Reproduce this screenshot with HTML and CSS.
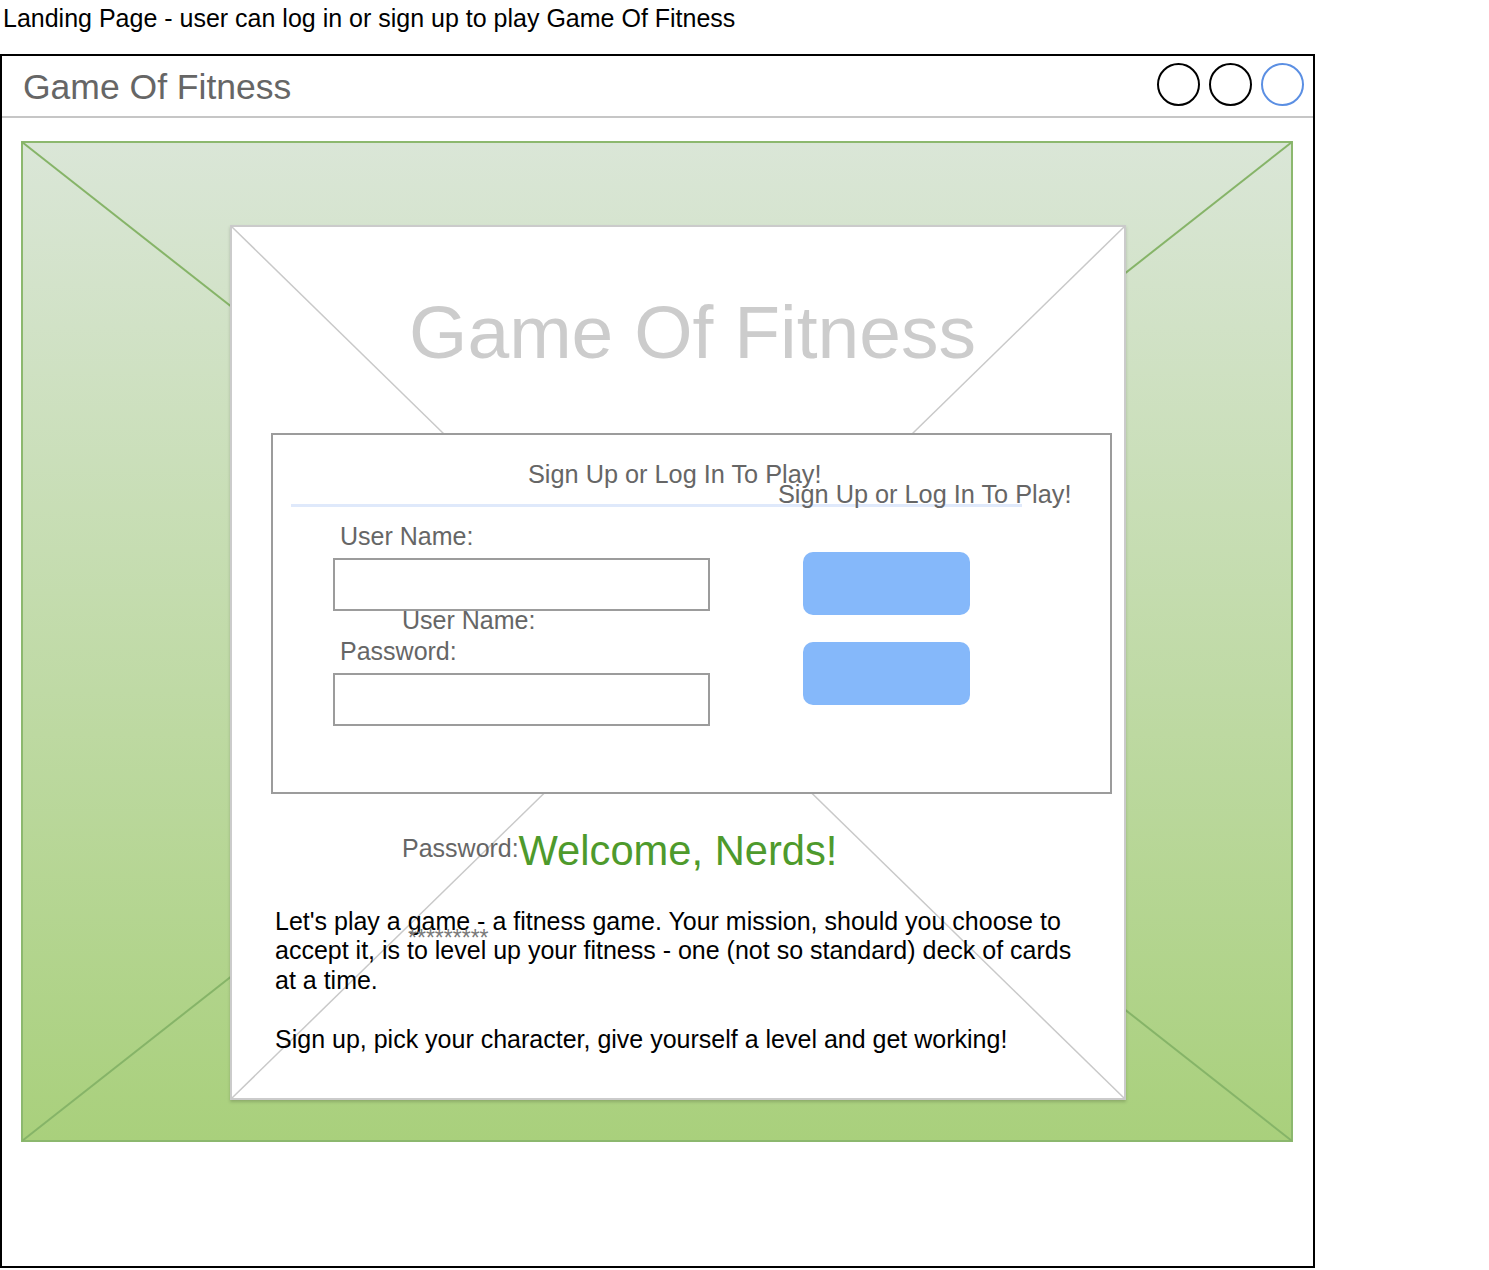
FILE: index.html
```html
<!DOCTYPE html>
<html lang="en">
<head>
<meta charset="utf-8">
<title>Game Of Fitness - Landing Page</title>
<link rel="stylesheet" href="styles.css">
</head>
<body>
<div class="caption">Landing Page - user can log in or sign up to play Game Of Fitness</div>
<div class="window">
  <div class="titlebar">
    <div class="app-title">Game Of Fitness</div>
    <div class="controls">
      <span class="dot"></span>
      <span class="dot"></span>
      <span class="dot dot-blue"></span>
    </div>
  </div>
  <div class="frame">
    <svg class="x-lines x-green" viewBox="0 0 100 100" preserveAspectRatio="none">
      <line x1="0" y1="0" x2="100" y2="100" vector-effect="non-scaling-stroke"/>
      <line x1="100" y1="0" x2="0" y2="100" vector-effect="non-scaling-stroke"/>
    </svg>
    <div class="card">
      <svg class="x-lines x-grey" viewBox="0 0 100 100" preserveAspectRatio="none">
        <line x1="0" y1="0" x2="100" y2="100" vector-effect="non-scaling-stroke"/>
        <line x1="100" y1="0" x2="0" y2="100" vector-effect="non-scaling-stroke"/>
      </svg>
      <h1 class="hero">Game Of Fitness</h1>
      <div class="login">
        <div class="login-head">Sign Up or Log In To Play!</div>
        <div class="login-rule"></div>
        <div class="login-body">
          <div class="fields">
            <div class="label">User Name:</div>
            <div class="input"></div>
            <div class="label label-gap">Password:</div>
            <div class="input"></div>
          </div>
          <div class="buttons">
            <div class="btn"></div>
            <div class="btn"></div>
          </div>
        </div>
      </div>
      <h2 class="welcome">Welcome, Nerds!</h2>
      <p class="intro">Let's play a game - a fitness game. Your mission, should you choose to<br>accept it, is to level up your fitness - one (not so standard) deck of cards<br>at a time.<br><br>Sign up, pick your character, give yourself a level and get working!</p>
      <span class="stray stray-signup">Sign Up or Log In To Play!</span>
      <span class="stray stray-user">User Name:</span>
      <span class="stray stray-pass">Password:</span>
      <span class="stray stray-stars">*********</span>
    </div>
  </div>
</div>
</body>
</html>
```
FILE: styles.css
```css
* { box-sizing: border-box; }

body {
  margin: 0;
  background: #ffffff;
  font-family: "Liberation Sans", Arial, Helvetica, sans-serif;
  color: #000;
}

.caption {
  font-size: 25px;
  line-height: 30px;
  padding: 3px 0 0 3px;
  height: 33px;
  white-space: nowrap;
}

.window {
  margin-top: 21px;
  width: 1315px;
  height: 1214px;
  border: 2px solid #000;
}

.titlebar {
  display: flex;
  justify-content: space-between;
  align-items: flex-start;
  height: 62px;
  border-bottom: 2px solid #c6c6c6;
  padding: 0 9px 0 21px;
}

.app-title {
  margin-top: 11px;
  font-size: 35.5px;
  line-height: 40px;
  color: #666666;
}

.controls {
  display: flex;
  gap: 9px;
  margin-top: 7px;
}

.dot {
  width: 43px;
  height: 43px;
  border-radius: 50%;
  border: 2px solid #000;
}

.dot-blue { border-color: #5b8fe3; }

.frame {
  position: relative;
  margin: 23px 0 0 19px;
  width: 1272px;
  height: 1001px;
  border: 2px solid #8cb86e;
  background: linear-gradient(#dae6d7, #a9d07c);
}

.x-lines {
  position: absolute;
  inset: -1px;
  width: calc(100% + 2px);
  height: calc(100% + 2px);
  overflow: visible;
}

.x-green line { stroke: #86b468; stroke-width: 2; }
.x-grey line { stroke: #c9c9c9; stroke-width: 1.5; }

.card {
  position: relative;
  z-index: 1;
  margin: 82px 0 0 207px;
  width: 896px;
  height: 875px;
  background: #ffffff;
  border: 2px solid #cbcbcb;
  box-shadow: 0 2px 3px rgba(0, 0, 0, 0.18);
  padding-top: 65px;
}

.hero {
  position: relative;
  margin: 0;
  padding-left: 29px;
  text-align: center;
  font-weight: normal;
  font-size: 75px;
  line-height: 80px;
  color: #cccccc;
}

.login {
  position: relative;
  margin: 61px 0 0 39px;
  width: 841px;
  height: 361px;
  border: 2px solid #9c9c9c;
  background: #ffffff;
  padding-top: 24px;
}

.login-head {
  margin-left: 255px;
  font-size: 25.3px;
  line-height: 30px;
  color: #666666;
  white-space: nowrap;
}

.login-rule {
  margin: 15px 0 0 18px;
  width: 731px;
  height: 3px;
  background: #dfe9fb;
}

.login-body {
  display: flex;
  gap: 93px;
  margin-top: 14px;
  padding-left: 60px;
}

.label {
  padding-left: 7px;
  font-size: 25px;
  line-height: 30px;
  color: #666666;
}

.label-gap { margin-top: 25px; }

.input {
  margin-top: 7px;
  width: 377px;
  height: 53px;
  border: 2px solid #9c9c9c;
  background: #ffffff;
}

.buttons {
  display: flex;
  flex-direction: column;
  gap: 27px;
  margin-top: 31px;
}

.btn {
  width: 167px;
  height: 63px;
  border-radius: 10px;
  background: #85b8fa;
}

.welcome {
  position: relative;
  margin: 33px 0 0 0;
  text-align: center;
  font-weight: normal;
  font-size: 41.7px;
  line-height: 48px;
  color: #4e9a2c;
}

.intro {
  position: relative;
  margin: 32px 0 0 43px;
  font-size: 25px;
  line-height: 29.4px;
  color: #000;
  white-space: nowrap;
}

.stray {
  position: absolute;
  z-index: 2;
  font-size: 25px;
  line-height: 30px;
  color: #666666;
  white-space: nowrap;
}

.stray-signup { top: 252px; left: 546px; font-size: 25.3px; }
.stray-user { top: 378px; left: 170px; }
.stray-pass { top: 606px; left: 170px; }

.stray-stars {
  top: 698px;
  left: 176px;
  font-size: 23px;
  line-height: 26px;
  color: #7a7a7a;
}
```
